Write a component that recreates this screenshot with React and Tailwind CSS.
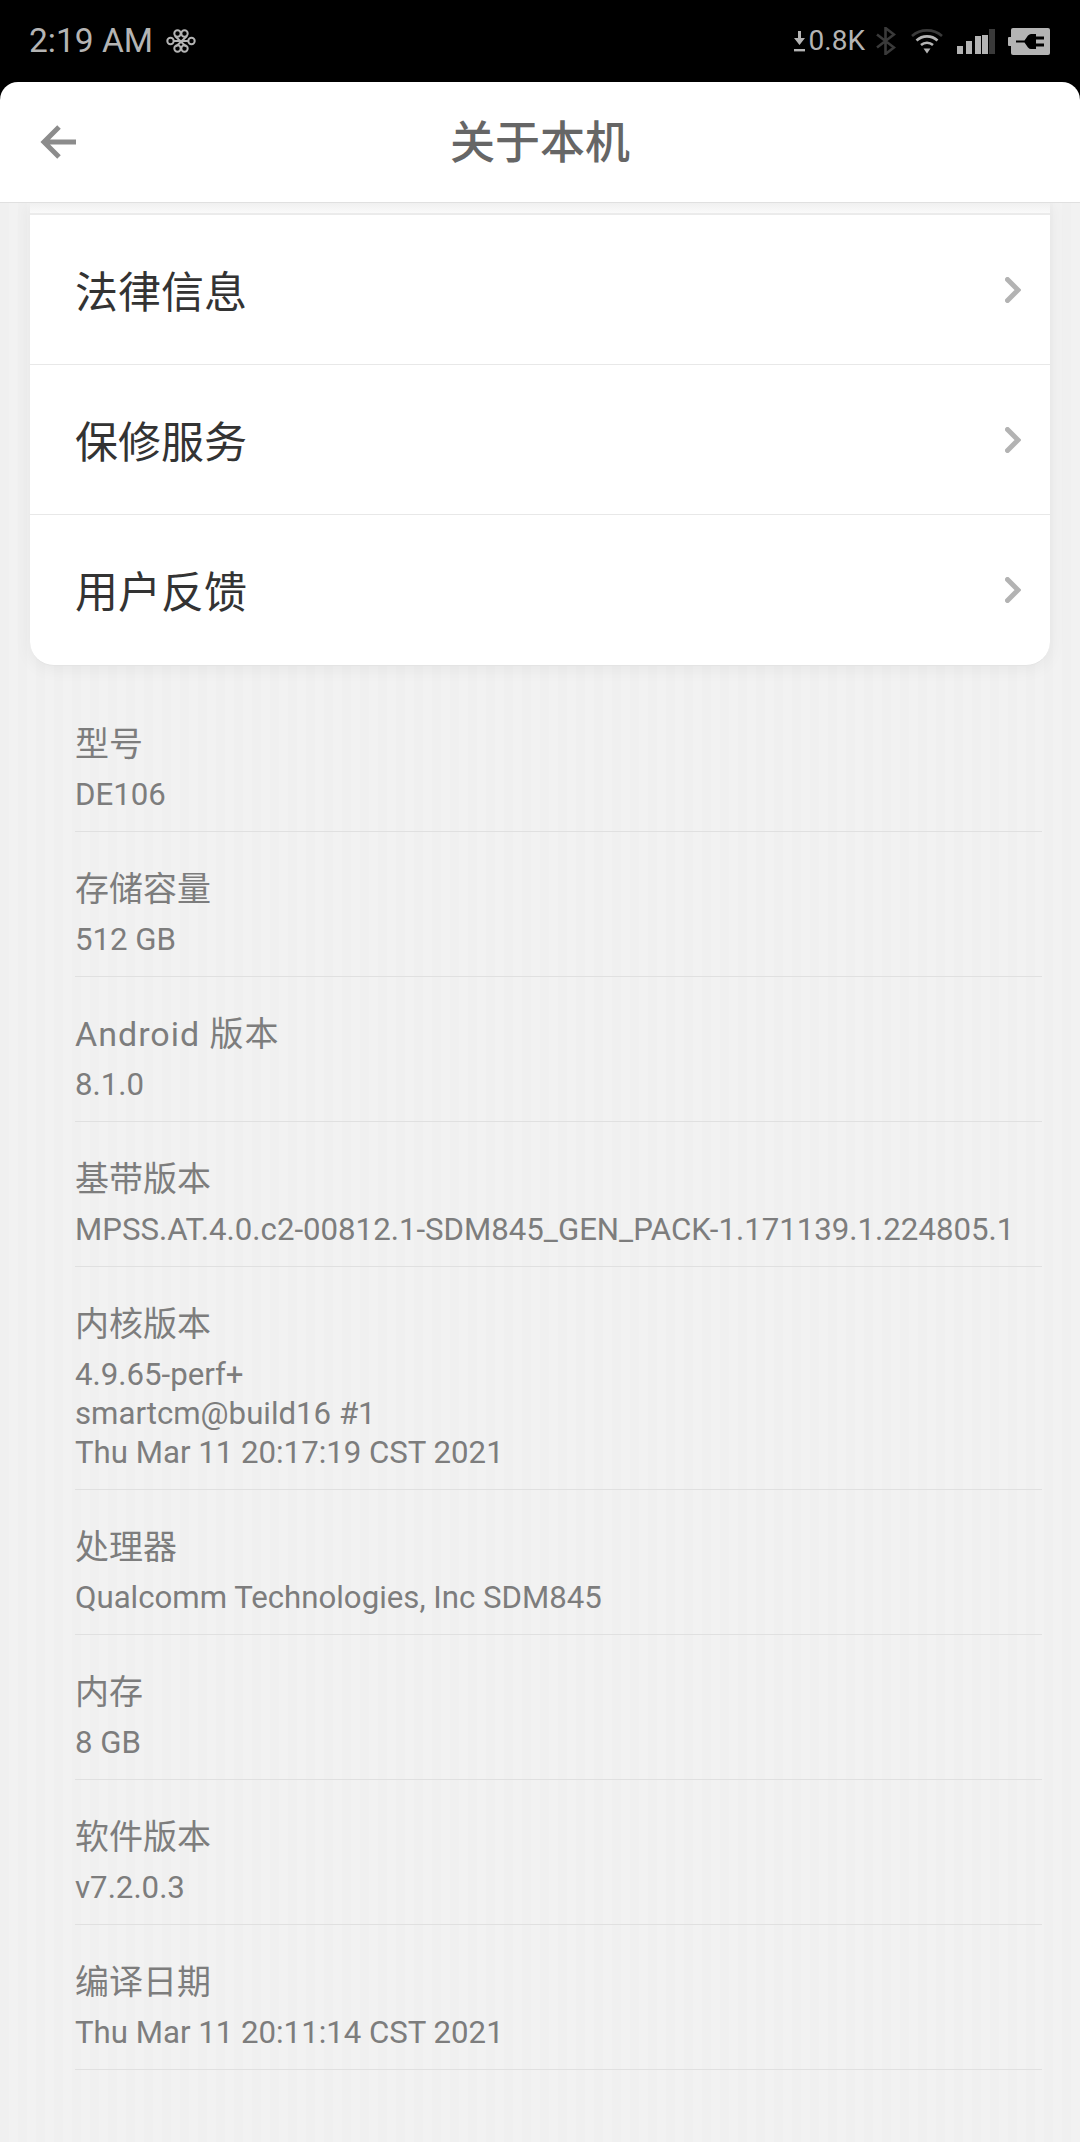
import React from 'react';

const font = 'font-["Roboto","Noto_Sans_CJK_SC",sans-serif]';

const menuRows = ['法律信息', '保修服务', '用户反馈'];

const infoRows = [
  { label: '型号', value: ['DE106'] },
  { label: '存储容量', value: ['512 GB'] },
  { label: 'Android 版本', value: ['8.1.0'], labelClass: 'tracking-[1px]' },
  { label: '基带版本', value: ['MPSS.AT.4.0.c2-00812.1-SDM845_GEN_PACK-1.171139.1.224805.1'] },
  { label: '内核版本', value: ['4.9.65-perf+', 'smartcm@build16 #1', 'Thu Mar 11 20:17:19 CST 2021'] },
  { label: '处理器', value: ['Qualcomm Technologies, Inc SDM845'] },
  { label: '内存', value: ['8 GB'] },
  { label: '软件版本', value: ['v7.2.0.3'] },
  { label: '编译日期', value: ['Thu Mar 11 20:11:14 CST 2021'] },
];

const KnotIcon = () => (
  <svg width="30" height="24" viewBox="0 0 30 24" fill="none" stroke="#b4b4b4" strokeWidth="2" className="ml-[13px]">
    <circle cx="4.5" cy="12" r="3.2" />
    <circle cx="25.5" cy="12" r="3.2" />
    <circle cx="11.5" cy="4.5" r="3.2" />
    <circle cx="18.5" cy="4.5" r="3.2" />
    <circle cx="11.5" cy="19.5" r="3.2" />
    <circle cx="18.5" cy="19.5" r="3.2" />
    <path d="M8 12h14M9 7l11 10.5M21 7L10 17.5" />
  </svg>
);

const DownIcon = () => (
  <svg width="11" height="21" viewBox="0 0 11 21" fill="#b4b4b4">
    <path d="M4 0h3v7h4l-5.5 7L0 7h4z" />
    <rect x="0" y="18" width="11" height="2.4" />
  </svg>
);

const BluetoothIcon = () => (
  <svg width="20" height="28" viewBox="0 0 20 28" fill="none" stroke="#3a3a3a" strokeWidth="2.6">
    <path d="M1 7.5l17 13L9.5 27V1L18 7.5 1 20.5" />
  </svg>
);

const WifiIcon = () => (
  <svg width="32" height="26" viewBox="0 0 32 26" fill="none" strokeWidth="2.6">
    <path d="M1 8C9.5 0.5 22.5 0.5 31 8" stroke="#3a3a3a" />
    <path d="M5.5 12.5C11.5 7 20.5 7 26.5 12.5" stroke="#b4b4b4" />
    <path d="M10 17C13.5 14 18.5 14 22 17" stroke="#b4b4b4" />
    <path d="M12.5 20.5h7L16 25.5z" fill="#b4b4b4" />
  </svg>
);

const SignalIcon = () => (
  <svg width="38" height="25" viewBox="0 0 38 25">
    <rect x="0" y="17" width="6" height="8" fill="#b4b4b4" />
    <rect x="9" y="12" width="6" height="13" fill="#b4b4b4" />
    <rect x="18" y="7" width="6" height="18" fill="#b4b4b4" />
    <rect x="25" y="6" width="6" height="19" fill="#b4b4b4" />
    <rect x="32" y="0" width="6" height="25" fill="#3a3a3a" />
  </svg>
);

const BatteryIcon = () => (
  <svg width="42" height="27" viewBox="0 0 42 27">
    <rect x="0" y="9" width="4" height="9" rx="1" fill="#b4b4b4" />
    <rect x="3" y="0" width="39" height="27" rx="2" fill="#b4b4b4" />
    <path d="M8 12.5h8.5L20 7.5c1-1 2-1.500 3-1.500h5v15h-5c-1 0-2-0.500-3-1.500l-3.500-5H8z" fill="#000" />
    <rect x="28" y="8.500" width="8" height="3" fill="#000" />
    <rect x="28" y="15.500" width="8" height="3" fill="#000" />
  </svg>
);

const BackIcon = () => (
  <svg width="36" height="34" viewBox="0 0 36 34" fill="none" stroke="#8c8c8c" strokeWidth="5">
    <path d="M36 17H4M19 2L4 17l15 15" />
  </svg>
);

const ChevronIcon = () => (
  <svg width="16" height="26" viewBox="0 0 16 26" fill="none" stroke="#b3b3b3" strokeWidth="5" strokeLinecap="round">
    <path d="M2.5 2.5L13 13 2.5 23.5" />
  </svg>
);

export default function App() {
  return (
    <div className={`${font} w-[1080px] h-[2142px] overflow-hidden bg-black flex flex-col`}>
      <div className="h-[82px] shrink-0 flex items-center justify-between pl-[29px] pr-[30px] text-[#b4b4b4]">
        <div className="flex items-center">
          <span className="text-[33.5px] leading-none">2:19 AM</span>
          <KnotIcon />
        </div>
        <div className="flex items-center">
          <DownIcon />
          <span className="text-[28px] leading-none ml-[4px] mr-[11px]">0.8K</span>
          <BluetoothIcon />
          <div className="w-[15px]" />
          <WifiIcon />
          <div className="w-[14px]" />
          <SignalIcon />
          <div className="w-[13px]" />
          <BatteryIcon />
        </div>
      </div>

      <div className="h-[121px] shrink-0 bg-white rounded-t-[18px] border-b border-[#e0e0e0] relative z-10 flex items-center justify-center">
        <div className="absolute left-[40px] top-[43px]">
          <BackIcon />
        </div>
        <span className="text-[45px] font-medium text-[#666666] leading-none pt-[2px]">关于本机</span>
      </div>

      <div className="flex-1 bg-[#f0f0f0] bg-[repeating-linear-gradient(90deg,#f0f0f0_0_9px,#f2f2f2_9px_18px)] px-[30px]">
        <div className="bg-white rounded-b-[24px] border-b border-[#e4e4e4] shadow-[0_2px_18px_rgba(0,0,0,0.06)]">
          <div className="h-[12px] bg-gradient-to-b from-[#f0f0f0] to-[#fafafa] border-b-2 border-[#ebebeb]" />
          {menuRows.map((row, i) => (
            <div
              key={row}
              className={`h-[150px] flex items-center justify-between pl-[45px] pr-[29px] ${i < 2 ? 'border-b border-[#e8e8e8]' : ''}`}
            >
              <span className="text-[43px] leading-none text-[#333333] pt-[7px]">{row}</span>
              <ChevronIcon />
            </div>
          ))}
        </div>

        <div className="pl-[45px] pr-[8px] pt-[21px]">
          {infoRows.map((row) => (
            <div key={row.label} className="border-b border-[#e0e0e0] pt-[32px] pb-[17px] text-[#7d7d7d]">
              <div className={`text-[34px] leading-[50px] ${row.labelClass || ''}`}>{row.label}</div>
              <div className="text-[31.2px] leading-[39px] mt-[6px] whitespace-nowrap">
                {row.value.map((line) => (
                  <div key={line}>{line}</div>
                ))}
              </div>
            </div>
          ))}
        </div>
      </div>
    </div>
  );
}
